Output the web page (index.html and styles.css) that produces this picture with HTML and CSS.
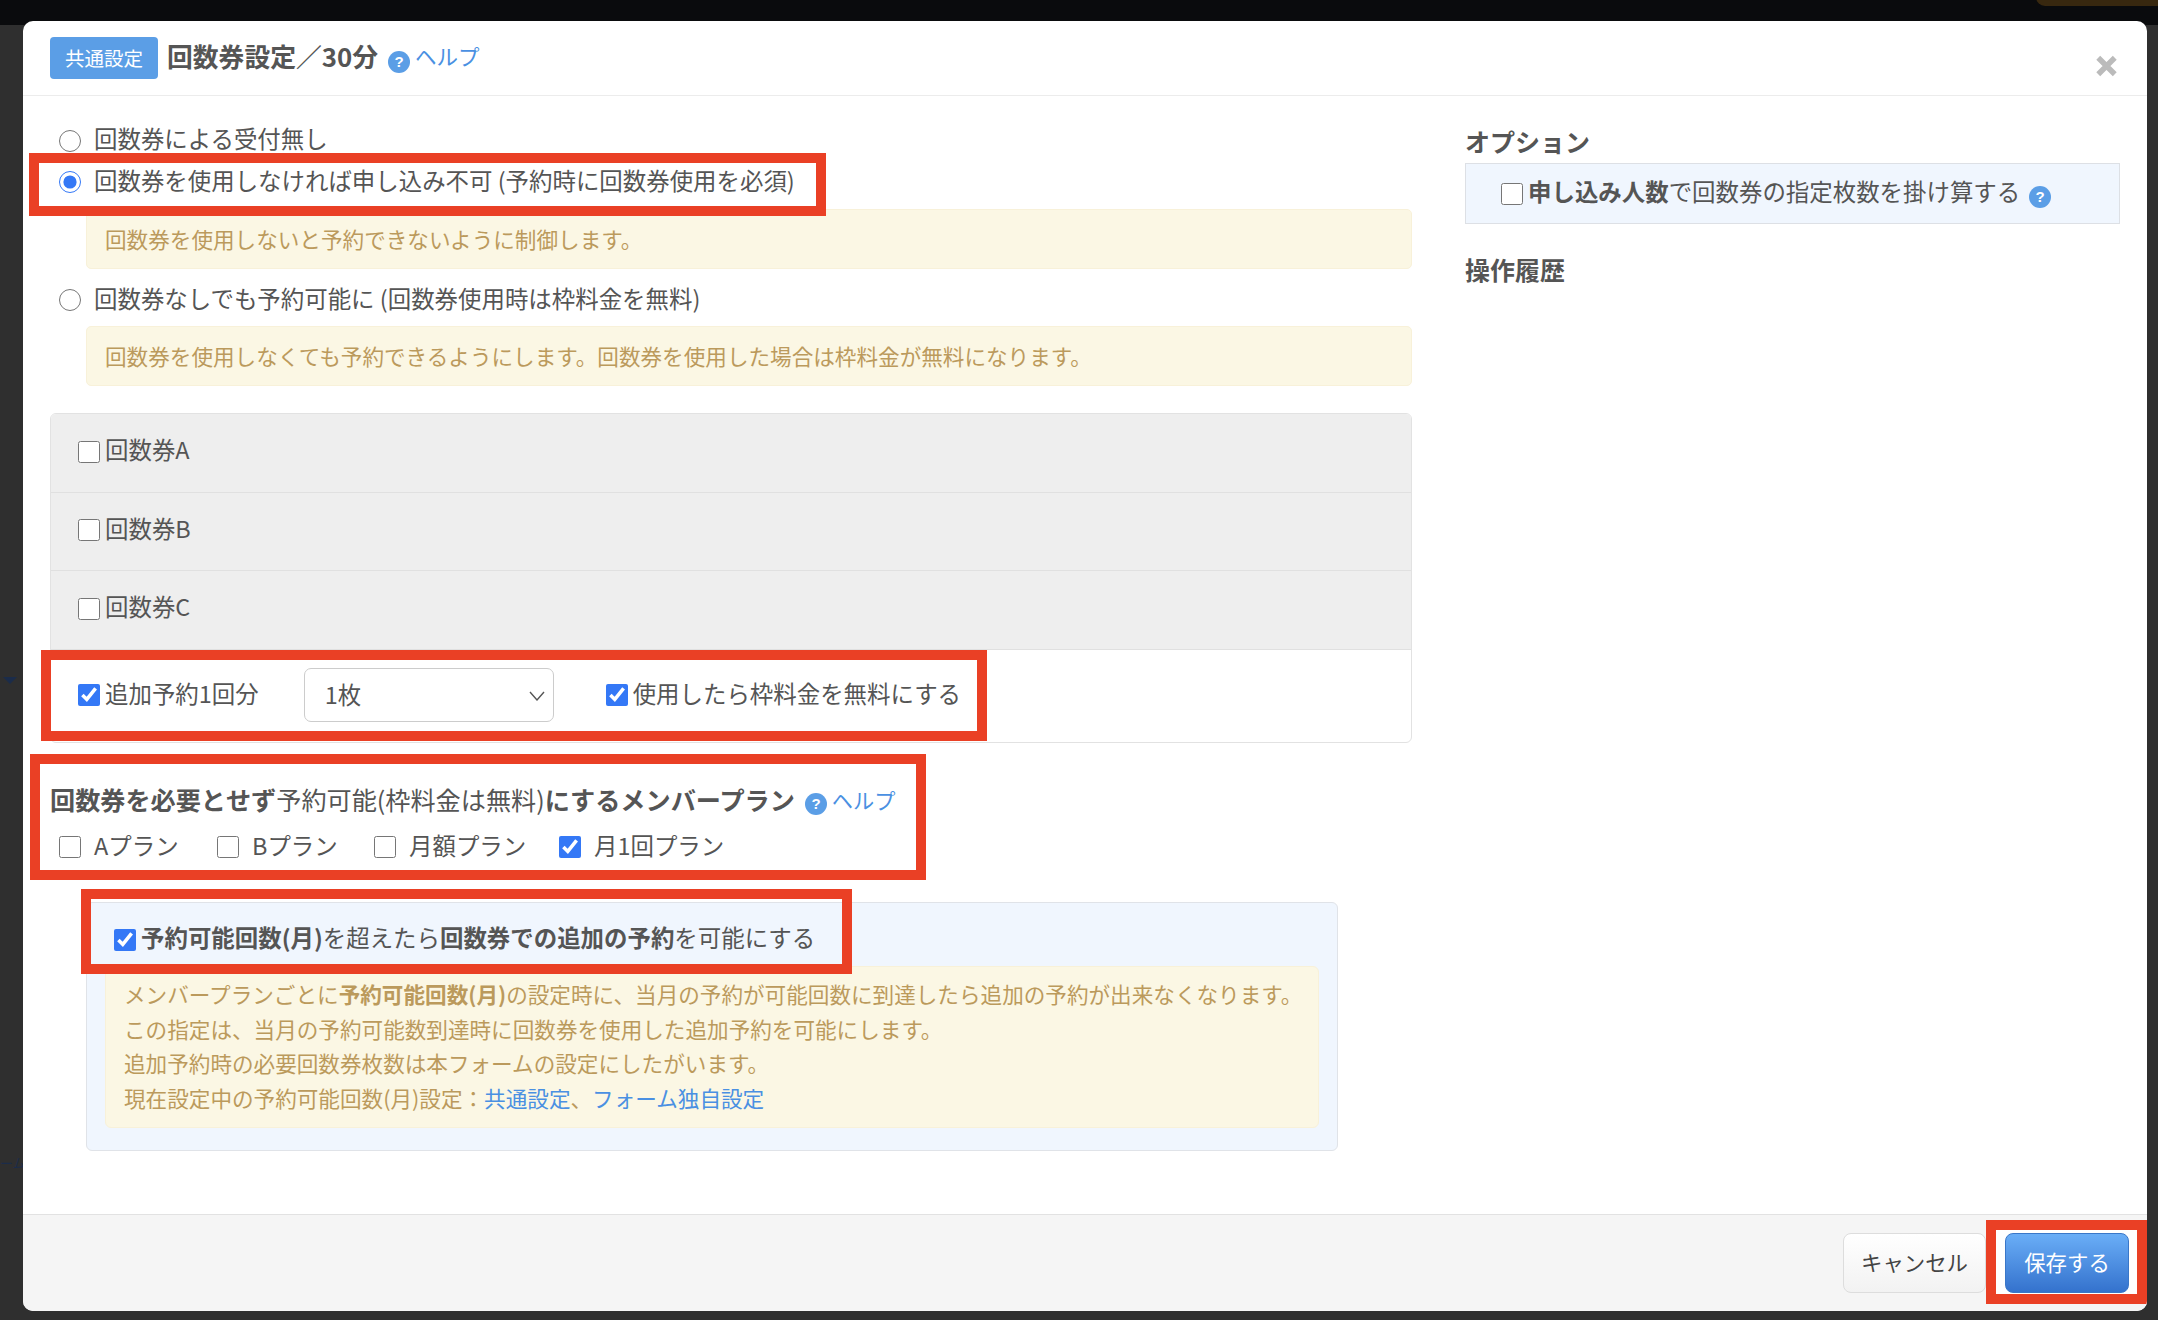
FILE: index.html
```html
<!DOCTYPE html>
<html lang="ja">
<head>
<meta charset="utf-8">
<title>回数券設定</title>
<link rel="stylesheet" href="styles.css">
</head>
<body>
<div class="topbar"><span class="top-accent"></span></div>
<span class="bg-arrow"></span>
<span class="bg-text">ーム</span>
<div class="modal">
  <header class="modal-header">
    <span class="badge">共通設定</span>
    <h1 class="modal-title">回数券設定／30分</h1>
    <svg class="help-icon title-help" viewBox="0 0 22 22"><circle cx="11" cy="11" r="11" fill="#5b9ee6"/><text x="11" y="16" text-anchor="middle" class="help-q">?</text></svg>
    <a class="link help-link">ヘルプ</a>
    <svg class="close" viewBox="0 0 24 24"><path d="M3 3 21 21M21 3 3 21" stroke="#bbbbbb" stroke-width="6" fill="none"/></svg>
  </header>
  <main class="modal-body">
    <section class="left">
      <label class="radio-row radio-first"><input type="radio" name="r"><span>回数券による受付無し</span></label>
      <label class="radio-row"><input type="radio" name="r" checked><span>回数券を使用しなければ申し込み不可 (予約時に回数券使用を必須)</span></label>
      <div class="alert alert-first">回数券を使用しないと予約できないように制御します。</div>
      <label class="radio-row radio-third"><input type="radio" name="r"><span>回数券なしでも予約可能に (回数券使用時は枠料金を無料)</span></label>
      <div class="alert alert-second">回数券を使用しなくても予約できるようにします。回数券を使用した場合は枠料金が無料になります。</div>

      <div class="panel">
        <label class="panel-row"><input type="checkbox"><span>回数券A</span></label>
        <label class="panel-row"><input type="checkbox"><span>回数券B</span></label>
        <label class="panel-row"><input type="checkbox"><span>回数券C</span></label>
        <div class="panel-row-open">
          <label class="check"><input type="checkbox" checked><span>追加予約1回分</span></label>
          <div class="select-wrap">
            <select class="select"><option>1枚</option></select>
            <svg class="chev" viewBox="0 0 16 10"><path d="M1 1 8 9 15 1" fill="none" stroke="#555" stroke-width="1.4"/></svg>
          </div>
          <label class="check"><input type="checkbox" checked><span>使用したら枠料金を無料にする</span></label>
        </div>
      </div>

      <div class="plan-head">
        <span class="strong-text"><b>回数券を必要とせず</b>予約可能(枠料金は無料)<b>にするメンバープラン</b></span>
        <svg class="help-icon plan-help" viewBox="0 0 22 22"><circle cx="11" cy="11" r="11" fill="#5b9ee6"/><text x="11" y="16" text-anchor="middle" class="help-q">?</text></svg>
        <a class="link help-link plan-link">ヘルプ</a>
      </div>
      <div class="plans">
        <label class="plan plan-a"><input type="checkbox"><span>Aプラン</span></label>
        <label class="plan plan-b"><input type="checkbox"><span>Bプラン</span></label>
        <label class="plan plan-c"><input type="checkbox"><span>月額プラン</span></label>
        <label class="plan"><input type="checkbox" checked><span>月1回プラン</span></label>
      </div>

      <div class="extra">
        <label class="extra-check"><input type="checkbox" checked><span><b>予約可能回数(月)</b>を超えたら<b>回数券での追加の予約</b>を可能にする</span></label>
        <div class="extra-alert">
          <p>メンバープランごとに<b>予約可能回数(月)</b>の設定時に、当月の予約が可能回数に到達したら追加の予約が出来なくなります。</p>
          <p>この指定は、当月の予約可能数到達時に回数券を使用した追加予約を可能にします。</p>
          <p>追加予約時の必要回数券枚数は本フォームの設定にしたがいます。</p>
          <p>現在設定中の予約可能回数(月)設定：<a class="link">共通設定</a>、<a class="link">フォーム独自設定</a></p>
        </div>
      </div>
    </section>
    <aside class="right">
      <h2 class="side-title">オプション</h2>
      <div class="option-box">
        <label class="check"><input type="checkbox"><span><b>申し込み人数</b>で回数券の指定枚数を掛け算する</span></label>
        <svg class="help-icon option-help" viewBox="0 0 22 22"><circle cx="11" cy="11" r="11" fill="#5b9ee6"/><text x="11" y="16" text-anchor="middle" class="help-q">?</text></svg>
      </div>
      <h2 class="side-title history">操作履歴</h2>
    </aside>
  </main>
  <footer class="modal-footer">
    <button class="btn btn-cancel">キャンセル</button>
    <button class="btn btn-save">保存する</button>
  </footer>
  <div class="mark mark-1"></div>
  <div class="mark mark-2"></div>
  <div class="mark mark-3"></div>
  <div class="mark mark-4"></div>
  <div class="mark mark-5"></div>
</div>
</body>
</html>
```

FILE: styles.css
```css
* { box-sizing: border-box; }
html, body { margin: 0; height: 100%; }
body {
  width: 2158px;
  height: 1320px;
  overflow: hidden;
  background: #2f2f2f;
  font-family: "Noto Sans CJK JP", "Noto Sans", sans-serif;
  font-size: 23.45px;
  color: #555555;
  position: relative;
}
.topbar { position: absolute; left: 0; top: 0; right: 0; height: 25px; background: #0a0b0d; }
.top-accent { position: absolute; left: 2036px; top: -12px; width: 130px; height: 18px; border-radius: 10px; background: #38280f; }
.bg-arrow { position: absolute; left: 3px; top: 677px; border-left: 7px solid transparent; border-right: 7px solid transparent; border-top: 7px solid #1b2c4a; }
.bg-text { position: absolute; left: 0; top: 1154px; font-size: 13px; line-height: 18px; color: #1b2c4a; white-space: nowrap; }

.modal {
  position: absolute;
  left: 23px;
  top: 21px;
  width: 2124px;
  height: 1290px;
  background: #fff;
  border-radius: 10px;
  overflow: hidden;
  display: flex;
  flex-direction: column;
}
.modal-header {
  height: 75px;
  flex: none;
  border-bottom: 1px solid #ececec;
  padding: 16px 0 0 27px;
  display: flex;
  align-items: flex-start;
  position: relative;
}
.badge {
  width: 108px;
  height: 42px;
  background: #5b9ee6;
  border-radius: 4px;
  color: #fff;
  font-size: 19.5px;
  line-height: 42px;
  text-align: center;
}
.modal-title { margin: 0 0 0 9px; font-size: 25.8px; line-height: 38px; font-weight: 700; color: #555; }
.help-icon { width: 22px; height: 22px; flex: none; display: block; }
.help-q { font: 700 15px "Liberation Sans", sans-serif; fill: #fff; }
.title-help { margin: 14px 5px 0 10px; }
.help-link { font-size: 21.5px; line-height: 38px; }
.plan-link { font-size: 21.2px; }
.link { color: #4a90e2; }
.close { position: absolute; left: 2072px; top: 34px; width: 23px; height: 22px; }

.modal-body { flex: 1; display: flex; padding: 24px 27px 0 27px; min-height: 0; }
.left { width: 1362px; flex: none; }
.right { flex: 1; margin: -1px 0 0 53px; min-width: 0; }

input { margin: 0; flex: none; width: 22px; height: 22px; accent-color: #3478f6; }
label { display: flex; align-items: center; }
label > span { padding-bottom: 5px; white-space: nowrap; }
.radio-row { height: 42px; padding-left: 9px; gap: 13px; }
.radio-first { height: 41px; }
.radio-third { margin-top: 10px; }
.alert {
  margin-left: 36px;
  height: 60px;
  background: #fbf7e4;
  border: 1px solid #f8f1d9;
  border-radius: 5px;
  color: #bb9a5c;
  font-size: 21.6px;
  line-height: 58px;
  padding-left: 18px;
}
.alert-first { margin-top: 6px; }
.alert-second { margin-top: 5px; }

.panel { margin-top: 27px; border: 1px solid #e2e2e2; border-radius: 6px; overflow: hidden; height: 330px; }
.panel-row { height: 78.5px; background: #eeeeee; border-bottom: 1px solid #e0e0e0; padding: 0 0 2px 27px; gap: 5px; }
.panel-row-open { display: flex; align-items: center; padding: 0 0 3px 27px; height: 94px; }
.check { gap: 5px; }
.select-wrap { position: relative; margin-left: 45px; margin-right: 52px; }
.select {
  display: block;
  width: 250px;
  height: 54px;
  appearance: none;
  background: #fff;
  border: 1px solid #cccccc;
  border-radius: 7px;
  padding: 0 0 2px 20px;
  font: inherit;
  color: #555;
}
.chev { position: absolute; right: 9px; top: 23px; width: 16px; height: 10px; }

.plan-head { margin-top: 37px; height: 40px; display: flex; align-items: center; }
.strong-text { font-size: 25.15px; white-space: nowrap; padding-bottom: 3px; }
.plan-help { margin: 8px 5px 0 10px; }
.plans { margin-top: 7px; height: 40px; display: flex; align-items: center; padding-left: 9px; }
.plan { gap: 13px; flex: none; }
.plan-a { width: 158px; }
.plan-b { width: 157px; }
.plan-c { width: 185px; }

.extra {
  margin: 35px 0 0 36px;
  width: 1252px;
  height: 249px;
  background: #f0f6fe;
  border: 1px solid #e0e3e8;
  border-radius: 6px;
  padding: 0 18px 0 18px;
}
.extra-check { height: 63px; padding: 10px 0 0 9px; gap: 5px; }
.extra-alert {
  height: 162px;
  background: #fbf7e4;
  border: 1px solid #f8f1d9;
  border-radius: 6px;
  color: #bb9a5c;
  font-size: 21.6px;
  line-height: 34.5px;
  padding: 10px 0 0 18px;
}
.extra-alert p { margin: 0; white-space: nowrap; }

.side-title { margin: 0; font-size: 25px; font-weight: 700; line-height: 44px; color: #555; }
.option-box {
  height: 61px;
  background: #f0f6fe;
  border: 1px solid #dde0e5;
  display: flex;
  align-items: center;
  padding-left: 35px;
}
.option-help { margin: 6px 0 0 9px; }
.history { margin-top: 23px; }

.modal-footer {
  height: 97px;
  flex: none;
  background: #f5f5f5;
  border-top: 1px solid #e2e2e2;
  display: flex;
  justify-content: flex-end;
  gap: 19px;
  padding: 18px 18px 0 0;
}
.btn { height: 60px; border-radius: 8px; font: inherit; font-size: 21.4px; padding: 0 0 3px; position: relative; z-index: 1; }
.btn-cancel { width: 143px; border: 1px solid #dddddd; background: linear-gradient(#ffffff, #f2f2f2); color: #444; }
.btn-save { width: 124px; border: 1px solid #3a77c8; background: linear-gradient(#6aaef7, #3472cd); color: #fff; }

.mark { position: absolute; border: 10px solid #ea4025; pointer-events: none; }
.mark-1 { left: 6px; top: 132px; width: 797px; height: 63px; }
.mark-2 { left: 18px; top: 629px; width: 946px; height: 91px; }
.mark-3 { left: 7px; top: 733px; width: 896px; height: 126px; }
.mark-4 { left: 58px; top: 868px; width: 771px; height: 85px; }
.mark-5 { left: 1963px; top: 1199px; width: 161px; height: 84px; background: #fff; }
```
